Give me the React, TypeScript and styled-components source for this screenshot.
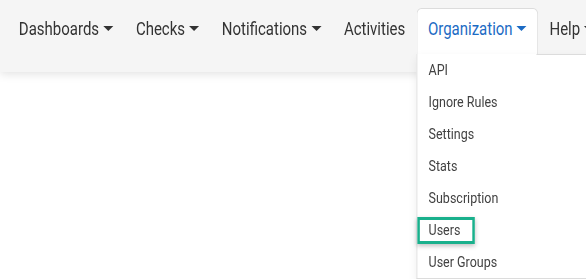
import React from "react";
import styled, { createGlobalStyle } from "styled-components";

// the reference capture is squeezed sideways, so the whole page is laid out
// wider and squeezed back by the same factor
const SQUEEZE = 0.833;

const GlobalStyle = createGlobalStyle`
  html, body, #root {
    height: 100%;
  }
  html {
    overflow: hidden;
  }
  body {
    margin: 0;
    padding: 0;
    background: #ffffff;
    font-family: Roboto, "Liberation Sans", sans-serif;
  }
`;

const navItems = [
  { label: "Dashboards", caret: true },
  { label: "Checks", caret: true },
  { label: "Notifications", caret: true },
  { label: "Activities", caret: false },
  { label: "Organization", caret: true, active: true },
  { label: "Help", caret: true },
];

const orgMenu = ["API", "Ignore Rules", "Settings", "Stats", "Subscription", "Users", "User Groups"];

const App = () => {
  return (
    <>
      <GlobalStyle />
      <Page>
        <Navbar>
          <NavList>
            {navItems.map((item) => (
              <NavItem key={item.label} $active={!!item.active}>
                <NavLink $active={!!item.active}>
                  {item.label}
                  {item.caret && <Caret />}
                </NavLink>
                {item.active && (
                  <Dropdown>
                    {orgMenu.map((entry) => (
                      <DropdownItem key={entry}>
                        <ItemLabel $highlight={entry === "Users"}>{entry}</ItemLabel>
                      </DropdownItem>
                    ))}
                  </Dropdown>
                )}
              </NavItem>
            ))}
          </NavList>
        </Navbar>
      </Page>
    </>
  );
};

const Page = styled.div`
  width: ${Math.ceil(586 / SQUEEZE)}px;
  min-height: 100%;
  background: #ffffff;
  transform: scaleX(${SQUEEZE});
  transform-origin: 0 0;
`;

const Navbar = styled.nav`
  height: 72px;
  background: #f5f5f5;
  box-shadow: 0 2px 10px rgba(0, 0, 0, 0.12);
  position: relative;
  z-index: 1;
`;

const NavList = styled.ul`
  list-style: none;
  margin: 0;
  padding: 8px 0 0 9px;
  display: flex;
  align-items: flex-start;
  white-space: nowrap;
`;

const NavItem = styled.li<{ $active: boolean }>`
  position: relative;
  height: 46px;
  box-sizing: border-box;
  border: 1px solid ${({ $active }) => ($active ? "#dcdcdc" : "transparent")};
  border-bottom: none;
  border-radius: 6px 6px 0 0;
  background: ${({ $active }) => ($active ? "#ffffff" : "transparent")};
`;

const NavLink = styled.span<{ $active: boolean }>`
  display: flex;
  align-items: center;
  height: 39px;
  padding: 0 12.6px;
  font-size: 18px;
  color: ${({ $active }) => ($active ? "#1c6bc4" : "#333333")};
`;

const Caret = styled.span`
  display: inline-block;
  margin-left: 5px;
  width: 0;
  height: 0;
  border-top: 5px solid currentColor;
  border-left: 6px solid transparent;
  border-right: 6px solid transparent;
`;

const Dropdown = styled.ul`
  position: absolute;
  top: 100%;
  left: -1px;
  margin: 0;
  padding: 0;
  list-style: none;
  width: 230px;
  background: #ffffff;
  border: 1px solid #dcdcdc;
  border-top: none;
  box-shadow: 0 4px 10px rgba(0, 0, 0, 0.08);
  &::before {
    content: "";
    position: absolute;
    top: 0;
    left: 143px;
    right: 0;
    border-top: 1px solid #dcdcdc;
  }
`;

const DropdownItem = styled.li`
  height: 32px;
  display: flex;
  align-items: center;
  font-size: 15px;
  color: #424242;
`;

const ItemLabel = styled.span<{ $highlight: boolean }>`
  display: inline-block;
  padding: 2px 14px 2px 10.4px;
  line-height: 17px;
  border: 3px solid ${({ $highlight }) => ($highlight ? "#19b08c" : "transparent")};
  box-shadow: ${({ $highlight }) => ($highlight ? "0 2px 5px rgba(0,0,0,0.25)" : "none")};
`;

export default App;
